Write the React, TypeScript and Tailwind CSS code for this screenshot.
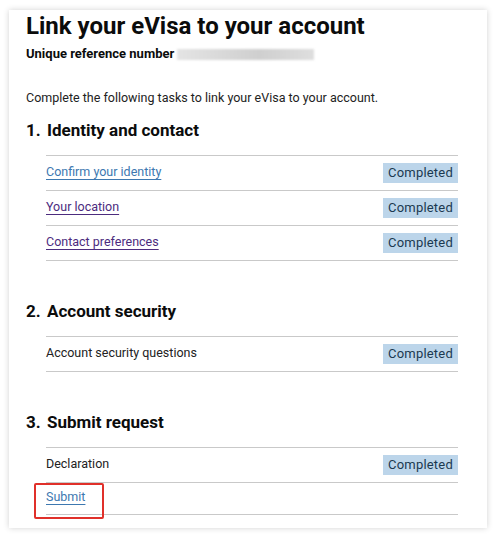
import React from "react";

type Row = { label: string; link?: "blue" | "purple"; done?: boolean; highlight?: boolean; short?: boolean };

function TaskRow({ row }: { row: Row }) {
  const linkCls =
    row.link === "blue"
      ? "text-[#3d78b0] underline decoration-1 underline-offset-[3px]"
      : row.link === "purple"
      ? "text-[#4c2c7e] underline decoration-1 underline-offset-[3px]"
      : "text-[#222]";
  return (
    <div
      className={`relative flex items-center justify-between border-b border-[#c9c9c9] ${
        row.short ? "h-[32px] pb-[1px]" : "h-[35px]"
      }`}
    >
      <span className={`text-[12.5px] ${linkCls}`}>{row.label}</span>
      {row.done && (
        <span className="bg-[#bcd5ea] text-[#1b3950] text-[13px] tracking-[0.2px] h-[20px] w-[75px] flex items-center justify-center">
          Completed
        </span>
      )}
      {row.highlight && (
        <div className="absolute left-[-12px] top-[0px] w-[70px] h-[36px] border-2 border-[#e0302a] rounded-[2px]" />
      )}
    </div>
  );
}

function Section({ n, title, rows }: { n: string; title: string; rows: Row[] }) {
  return (
    <div>
      <h2 className="flex text-[17px] font-bold text-[#0b0c0c] h-[24px] items-center">
        <span className="w-[21px]">{n}</span>
        <span>{title}</span>
      </h2>
      <div className="ml-[20px] mr-[12px] mt-[12px] border-t border-[#c9c9c9]">
        {rows.map((r) => (
          <TaskRow key={r.label} row={r} />
        ))}
      </div>
    </div>
  );
}

export default function App() {
  return (
    <div className="w-[494px] h-[538px] bg-white pt-[10px] pl-[9px]" style={{ fontFamily: 'Roboto, "Liberation Sans", Arial, sans-serif' }}>
      <div className="w-[478px] h-[518px] bg-white shadow-[0_0_6px_rgba(0,0,0,0.18)] pl-[17px] pr-[17px] pt-[1px]">
        <h1 className="text-[24px] font-bold text-[#0b0c0c] leading-[30px]">Link your eVisa to your account</h1>
        <div className="flex items-center mt-[4px] h-[18px]">
          <span className="text-[13px] font-bold text-[#0b0c0c]">Unique reference number</span>
          <span className="ml-[3px] h-[11px] w-[137px] bg-[linear-gradient(90deg,#e4e4e4,#d6d6d6_40%,#cfcfcf_60%,#dedede)] blur-[1px]" />
        </div>
        <p className="mt-[26px] text-[12.5px] text-[#222]">Complete the following tasks to link your eVisa to your account.</p>
        <div className="mt-[11px]">
          <Section
            n="1."
            title="Identity and contact"
            rows={[
              { label: "Confirm your identity", link: "blue", done: true },
              { label: "Your location", link: "purple", done: true },
              { label: "Contact preferences", link: "purple", done: true },
            ]}
          />
        </div>
        <div className="mt-[39px]">
          <Section n="2." title="Account security" rows={[{ label: "Account security questions", done: true }]} />
        </div>
        <div className="mt-[39px]">
          <Section
            n="3."
            title="Submit request"
            rows={[
              { label: "Declaration", done: true },
              { label: "Submit", link: "blue", highlight: true, short: true },
            ]}
          />
        </div>
      </div>
    </div>
  );
}
